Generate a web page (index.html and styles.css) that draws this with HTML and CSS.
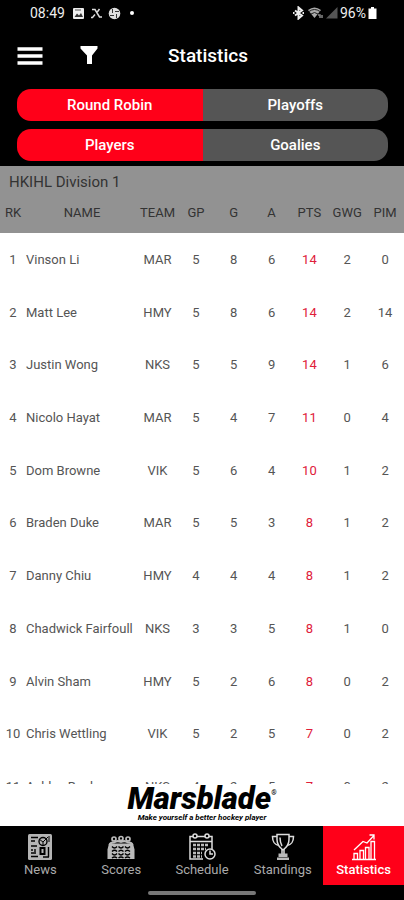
FILE: index.html
```html
<!DOCTYPE html>
<html lang="en">
<head>
  <meta charset="UTF-8" />
  <meta name="viewport" content="width=device-width, initial-scale=1.0"/>
  <title>Statistics</title>
  <link rel="stylesheet" href="styles.css">
</head>
<body>

  <div class="status-bar">
    <span>08:49</span>
    <svg class="status-icon" width="13" height="13" viewBox="0 0 13 13">
      <rect x="1" y="1" width="11" height="11" rx="1" fill="#eee"/>
      <path d="M2.500 10 5 6.500l2 2L9 6l2 4z" fill="#333"/>
      <path d="M3 3h6" stroke="#555"/>
    </svg>
    <svg class="status-icon" width="13" height="13" viewBox="0 0 13 13">
      <path d="M2 2.500h3l4.500 7.500h2.500M9.500 2 6.500 6M5 7.500 2.500 10.500H1" fill="none" stroke="#ddd" stroke-width="1.500"/>
    </svg>
    <svg class="status-icon" width="13" height="13" viewBox="0 0 13 13">
      <circle cx="6.500" cy="6.500" r="5.800" fill="#ddd"/>
      <path d="M4.500 2v4M8.500 7v4M2 8.500h4M7 4.500h4" stroke="#333"/>
    </svg>
    <span class="dot"></span>
    <div class="status-right">
      <svg width="13" height="14" viewBox="0 0 13 14">
        <path d="m3 4.500 7 5-3.500 3v-11l3.500 3-7 5" fill="none" stroke="#eee" stroke-width="2"/>
        <path d="M1 7h1.500M10.500 7H12" stroke="#eee" stroke-width="2"/>
      </svg>
      <svg width="17" height="14" viewBox="0 0 17 14">
        <path d="M1 4q6.500-5 13 0L7.500 12z" fill="#aaa"/>
        <path d="M2 5.500q5.500-4 11 0M4 8q3.500-3 7 0" fill="none" stroke="#222"/>
        <path d="M11 9h2v3M15 9v3" stroke="#888" stroke-width="1.500" fill="none"/>
      </svg>
      <svg width="12" height="14" viewBox="0 0 12 14"><path d="M0 12.500 11.500 1v11.500z" fill="#555"/></svg>
      <span class="battery-level">96%</span>
      <svg width="9" height="14" viewBox="0 0 9 14"><path d="M3 1h3v1.500h2.500V13H.5V2.500H3z" fill="#fff"/></svg>
    </div>
  </div>

  <header>
    <button class="icon-button" aria-label="Menu">
      <svg width="26" height="18" viewBox="0 0 26 18"><path d="M.5 2h25M.5 9h25M.5 16h25" stroke="#fff" stroke-width="3.400"/></svg>
    </button>
    <button class="icon-button" aria-label="Filter">
      <svg width="18" height="19" viewBox="0 0 18 19"><path d="M.5 0h17v2.500L12 9.500V18H7V9.500L.5 2.500z" fill="#fff"/></svg>
    </button>
    <h1>Statistics</h1>
  </header>

  <div class="filters">
    <div class="segment">
      <button class="active">Round Robin</button>
      <button>Playoffs</button>
    </div>
    <div class="segment">
      <button class="active">Players</button>
      <button>Goalies</button>
    </div>
  </div>

  <main>
    <table>
      <caption>HKIHL Division 1</caption>
      <thead>
        <tr>
          <th class="rank">RK</th>
          <th class="name">NAME</th>
          <th class="team">TEAM</th>
          <th>GP</th>
          <th>G</th>
          <th>A</th>
          <th>PTS</th>
          <th>GWG</th>
          <th>PIM</th>
        </tr>
      </thead>
      <tbody>
        <tr><td>1</td><td class="name">Vinson Li</td><td>MAR</td><td>5</td><td>8</td><td>6</td><td class="points">14</td><td>2</td><td>0</td></tr>
        <tr><td>2</td><td class="name">Matt Lee</td><td>HMY</td><td>5</td><td>8</td><td>6</td><td class="points">14</td><td>2</td><td>14</td></tr>
        <tr><td>3</td><td class="name">Justin Wong</td><td>NKS</td><td>5</td><td>5</td><td>9</td><td class="points">14</td><td>1</td><td>6</td></tr>
        <tr><td>4</td><td class="name">Nicolo Hayat</td><td>MAR</td><td>5</td><td>4</td><td>7</td><td class="points">11</td><td>0</td><td>4</td></tr>
        <tr><td>5</td><td class="name">Dom Browne</td><td>VIK</td><td>5</td><td>6</td><td>4</td><td class="points">10</td><td>1</td><td>2</td></tr>
        <tr><td>6</td><td class="name">Braden Duke</td><td>MAR</td><td>5</td><td>5</td><td>3</td><td class="points">8</td><td>1</td><td>2</td></tr>
        <tr><td>7</td><td class="name">Danny Chiu</td><td>HMY</td><td>4</td><td>4</td><td>4</td><td class="points">8</td><td>1</td><td>2</td></tr>
        <tr><td>8</td><td class="name">Chadwick Fairfoull</td><td>NKS</td><td>3</td><td>3</td><td>5</td><td class="points">8</td><td>1</td><td>0</td></tr>
        <tr><td>9</td><td class="name">Alvin Sham</td><td>HMY</td><td>5</td><td>2</td><td>6</td><td class="points">8</td><td>0</td><td>2</td></tr>
        <tr><td>10</td><td class="name">Chris Wettling</td><td>VIK</td><td>5</td><td>2</td><td>5</td><td class="points">7</td><td>0</td><td>2</td></tr>
        <tr><td>11</td><td class="name">Ashley Bank</td><td>NKS</td><td>4</td><td>2</td><td>5</td><td class="points">7</td><td>0</td><td>2</td></tr>
      </tbody>
    </table>
  </main>

  <a class="sponsor" href="#">
    <span class="sponsor-name">Marsblade<sup>®</sup></span>
    <span class="sponsor-tagline">Make yourself a better hockey player</span>
  </a>

  <nav>
    <a href="#">
      <svg width="28" height="28" viewBox="0 0 28 28">
        <rect x="2" y="1" width="24" height="26" rx="1.500" fill="#b4b4b4"/>
        <path d="M5 4.500h7M5 8h4M5 13h6M5 17h2M9 16v3M5 20h5M5 23.500h7M22.500 14v10M17 24h6" stroke="#000" stroke-width="1.400"/>
        <path d="M13.500 14h6v8h-6z" fill="#000"/>
        <path d="M15.500 16h2v4h-2z" fill="#b4b4b4"/>
        <circle cx="17" cy="8.500" r="4" fill="none" stroke="#000" stroke-width="1.400"/>
        <path d="m13 6 4 3 5-5M17 9v3M23 3v6" fill="none" stroke="#000"/>
      </svg>
      News
    </a>
    <a href="#">
      <svg width="28" height="28" viewBox="0 0 28 28" fill="none" stroke="#bbb">
        <circle cx="7" cy="6" r="2" stroke-width="1.700"/>
        <circle cx="14" cy="5.500" r="2" stroke-width="1.700"/>
        <circle cx="21" cy="6" r="2" stroke-width="1.700"/>
        <path d="M2.500 12q1-3 4.500-2.500Q10.500 7 14 9q3.500-2 7 .5 3.500-.5 4.500 2.500" stroke-width="2"/>
        <path d="M2 10.500h24l1.500 6V26H.5v-9.500z" fill="#bbb" stroke="none"/>
        <path d="M5 13.500q2.500 3 5 0M11.500 13.500q2.500 3 5 0M18 13.500q2.500 3 5 0M5 18.500q2.500-2.500 5 0M11.500 18.500q2.500-2.500 5 0M18 18.500q2.500-2.500 5 0M5 20.500q2.500 3 5 0M11.500 20.500q2.500 3 5 0M18 20.500q2.500 3 5 0M5 25q2.500-2 5 0M11.500 25q2.500-2 5 0M18 25q2.500-2 5 0" stroke="#000" stroke-width="1.400"/>
      </svg>
      Scores
    </a>
    <a href="#">
      <svg width="28" height="28" viewBox="0 0 28 28" fill="none" stroke="#ddd" stroke-width="1.500">
        <path d="M15 26H2V3.500h22V16M2 8.500h22"/>
        <circle cx="7" cy="3" r="2" fill="#000"/>
        <circle cx="19" cy="3" r="2" fill="#000"/>
        <path d="M5 12h16M5 16h13M5 20h9M5 23.500h9" stroke="#bbb" stroke-dasharray="3 1" stroke-width="2.600"/>
        <circle cx="22" cy="21" r="5" fill="#000"/>
        <path d="M22 17.500V21h3"/>
      </svg>
      Schedule
    </a>
    <a href="#">
      <svg width="28" height="28" viewBox="0 0 28 28" fill="none" stroke="#ddd" stroke-width="1.500">
        <path d="M8 1.500h12v5c0 5-2.500 8-6 10.500-3.500-2.500-6-5.500-6-10.500z"/>
        <path d="M8 3.500H3.500c0 6 2 8 6.500 9M20 3.500h4.500c0 6-2 8-6.500 9M11 4.500c0 4 .5 6 2 8.500"/>
        <path d="M13 16v5M15 16v5"/>
        <path d="M9.500 20.500h9V24h-9zM8 24.500h12V27H8z" fill="#bbb" stroke="none"/>
      </svg>
      Standings
    </a>
    <a class="active" href="#">
      <svg width="28" height="28" viewBox="0 0 28 28" fill="none" stroke="#fff" stroke-width="1.300">
        <path d="M2 26.500h24M4 26v-5.500h3.500V26M10 26v-8.500h3.500V26M15.500 26V14.500H19V26M21 26V8.500h3.500V26"/>
        <path d="M4 17 13 8.500l4 1.500 6.500-7M19.500 2h4.500v4.500"/>
      </svg>
      Statistics
    </a>
  </nav>
  <div class="gesture-bar"></div>

</body>
</html>
```
FILE: styles.css
```css
* {
  box-sizing: border-box;
}

body {
  background-color: #000;
  color: #555;
  font-family: Roboto, sans-serif;
  margin: 0;
  height: 100vh;
  display: flex;
  flex-direction: column;
}

button {
  border: none;
  padding: 0;
  background: none;
  color: white;
  font-family: inherit;
  cursor: pointer;
}

a {
  text-decoration: none;
}

.status-bar {
  display: flex;
  align-items: center;
  gap: 5px;
  height: 26px;
  padding: 0 27px 0 30px;
  color: #eee;
  font-size: 14px;
}

.status-bar span + .status-icon {
  margin-left: 2px;
}

.dot {
  width: 4px;
  height: 4px;
  margin-left: 4px;
  border-radius: 50%;
  background-color: #fff;
}

.status-right {
  display: flex;
  align-items: center;
  gap: 2px;
  margin-left: auto;
}

header {
  display: grid;
  grid-template-columns: 60px 57px 1fr 117px;
  align-items: center;
  height: 59px;
  margin-bottom: 4px;
}

.icon-button svg {
  display: block;
  margin: auto;
}

h1 {
  margin: 0;
  color: white;
  font-size: 19px;
  font-weight: 500;
  text-align: center;
  padding-left: 12px;
}

/* Segmented switches */
.filters {
  display: flex;
  flex-direction: column;
  gap: 8px;
  padding: 0 16px 5px 17px;
}

.segment {
  display: flex;
  height: 32px;
  border-radius: 14px;
  overflow: hidden;
}

.segment button {
  flex: 1;
  background-color: #555;
  font-size: 15px;
  font-weight: 500;
}

.segment .active {
  background-color: #ff0019;
}

/* Player table */
main {
  flex: 1;
  min-height: 0;
  overflow: hidden;
  background-color: white;
}

table {
  width: 100%;
  table-layout: fixed;
  border-collapse: collapse;
  font-size: 13px;
  text-align: center;
}

caption {
  height: 32px;
  padding-left: 9px;
  background-color: #929292;
  color: #333;
  font-size: 15px;
  line-height: 32px;
  text-align: left;
}

thead {
  background-color: #929292;
  color: #333;
}

th {
  height: 35px;
  padding: 0 0 6px;
  font-weight: 400;
}

td {
  padding: 0;
}

tbody {
  height: 580px;
}

.rank {
  width: 26px;
}

th.name {
  width: 112px;
}

.team {
  width: 39px;
}

td.name {
  text-align: left;
  white-space: nowrap;
}

.points {
  color: #e0203a;
}

.sponsor {
  display: flex;
  flex-direction: column;
  align-items: center;
  height: 42px;
  background-color: white;
  color: #000;
  font-style: italic;
}

.sponsor-name {
  font-size: 31px;
  font-weight: 900;
  line-height: 29px;
}

.sponsor-name sup {
  font-size: 7px;
  line-height: 0;
  vertical-align: 14px;
}

.sponsor-tagline {
  font-size: 8px;
  font-weight: 700;
  line-height: 10px;
}

nav {
  display: flex;
  height: 59px;
}

nav a {
  flex: 1;
  display: flex;
  flex-direction: column;
  align-items: center;
  padding-top: 7px;
  color: #aaa;
  font-size: 13px;
  line-height: 18px;
}

nav .active {
  background-color: #ff0019;
  color: white;
  font-weight: 500;
}

.gesture-bar {
  width: 108px;
  height: 4px;
  margin: 6px auto 5px;
  border-radius: 2px;
  background-color: #777;
}
```
